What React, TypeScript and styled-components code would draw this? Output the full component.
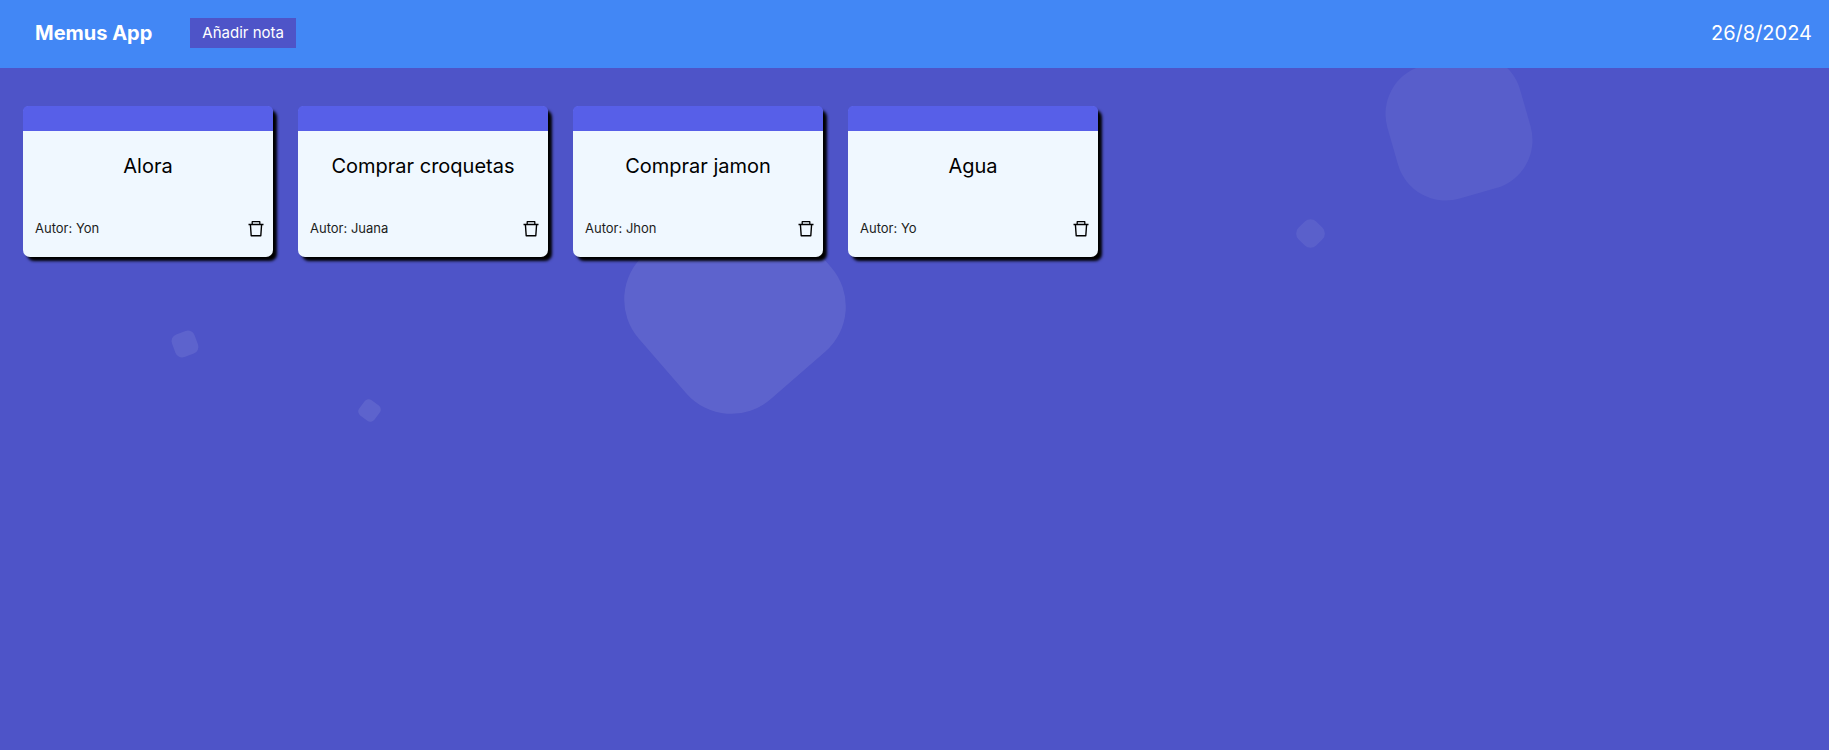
import React from "react";
import styled, { createGlobalStyle } from "styled-components";

const GlobalStyle = createGlobalStyle`
  * {
    box-sizing: border-box;
  }

  body {
    margin: 0;
    background: #4e54c8;
    font-family: Inter, "Liberation Sans", sans-serif;
  }
`;

const Page = styled.div`
  position: relative;
  min-height: 100vh;
  overflow: hidden;
`;

const Header = styled.header`
  position: relative;
  display: flex;
  align-items: center;
  height: 68px;
  padding: 0 17px 2px 35px;
  background: #4287f5;
  color: #fff;
`;

const Brand = styled.h1`
  margin: 0 38px 0 0;
  font-size: 20px;
  font-weight: 700;
  line-height: 24px;
`;

const AddButton = styled.button`
  height: 30px;
  padding: 0 12px 2px;
  border: 0;
  background: #4e54c8;
  color: #fff;
  font: inherit;
  font-size: 15px;
  cursor: pointer;
`;

const Today = styled.time`
  margin-left: auto;
  font-size: 20px;
  line-height: 24px;
`;

const Board = styled.main`
  position: relative;
  display: flex;
  flex-wrap: wrap;
  gap: 25px;
  padding: 38px 23px;
`;

const Card = styled.article`
  display: flex;
  flex-direction: column;
  width: 250px;
  min-height: 151px;
  border-radius: 7px;
  background: #f0f8ff;
  box-shadow: 4px 4px 3px #000;
  color: #000;
`;

const CardBar = styled.div`
  height: 25px;
  border-radius: 5px 5px 0 0;
  background: #575fe8;
`;

const CardTitle = styled.h2`
  margin: 0;
  padding: 23px 12px;
  font-size: 20px;
  font-weight: 400;
  line-height: 24px;
  text-align: center;
`;

const CardFooter = styled.footer`
  display: flex;
  align-items: center;
  justify-content: space-between;
  margin-top: auto;
  padding: 0 8px 19px 12px;
`;

const Author = styled.span`
  color: #1c1c20;
  font-size: 13px;
  line-height: 20px;
`;

const DeleteButton = styled.button`
  display: flex;
  padding: 0;
  border: 0;
  background: none;
  color: #000;
  cursor: pointer;
`;

const Backdrop = styled.div`
  position: absolute;
  inset: 0;
  overflow: hidden;
`;

type ShapeProps = {
  $left: string;
  $top: number;
  $size: number;
  $radius: number;
  $turn: number;
  $alpha: number;
};

const Shape = styled.span<ShapeProps>`
  position: absolute;
  left: ${(p) => p.$left};
  top: ${(p) => p.$top}px;
  width: ${(p) => p.$size}px;
  height: ${(p) => p.$size}px;
  border-radius: ${(p) => p.$radius}px;
  background: rgba(255, 255, 255, ${(p) => p.$alpha});
  transform: rotate(${(p) => p.$turn}deg);
`;

const shapes: ShapeProps[] = [
  { $left: "calc(35% - 1px)", $top: 207, $size: 192, $radius: 60, $turn: -41, $alpha: 0.09 },
  { $left: "76%", $top: 58, $size: 138, $radius: 50, $turn: -16, $alpha: 0.06 },
  { $left: "calc(71% - 1px)", $top: 221, $size: 25, $radius: 8, $turn: 45, $alpha: 0.07 },
  { $left: "calc(10% - 10px)", $top: 332, $size: 24, $radius: 7, $turn: -20, $alpha: 0.09 },
  { $left: "calc(20% - 6px)", $top: 401, $size: 19, $radius: 5, $turn: 37, $alpha: 0.09 },
];

const notes = [
  { title: "Alora", author: "Yon" },
  { title: "Comprar croquetas", author: "Juana" },
  { title: "Comprar jamon", author: "Jhon" },
  { title: "Agua", author: "Yo" },
];

const TrashIcon = () => (
  <svg width="18" height="18" viewBox="0 0 18 18" fill="none" stroke="currentColor" aria-hidden="true">
    <path d="M1.5 5.5h15" strokeWidth="1.5" />
    <path d="M5.2 5.2V2.6h7.6v2.6" strokeWidth="1.3" strokeLinejoin="bevel" />
    <path d="M3.4 5.5l.8 11.3h9.6l.8-11.3" strokeWidth="1.4" strokeLinejoin="round" />
  </svg>
);

export default function App() {
  return (
    <Page>
      <GlobalStyle />
      <Backdrop aria-hidden="true">
        {shapes.map((shape) => (
          <Shape key={shape.$left} {...shape} />
        ))}
      </Backdrop>
      <Header>
        <Brand>Memus App</Brand>
        <AddButton type="button">Añadir nota</AddButton>
        <Today dateTime="2024-08-26">26/8/2024</Today>
      </Header>
      <Board>
        {notes.map((note) => (
          <Card key={note.title}>
            <CardBar />
            <CardTitle>{note.title}</CardTitle>
            <CardFooter>
              <Author>Autor: {note.author}</Author>
              <DeleteButton type="button" aria-label={`Eliminar ${note.title}`}>
                <TrashIcon />
              </DeleteButton>
            </CardFooter>
          </Card>
        ))}
      </Board>
    </Page>
  );
}
